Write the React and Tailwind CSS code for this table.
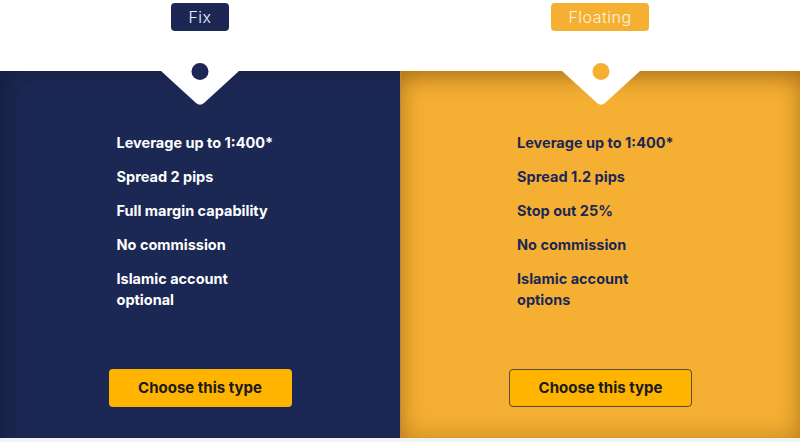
import React from 'react';

const PLANS = [
  {
    name: 'Fix',
    features: ['Leverage up to 1:400*', 'Spread 2 pips', 'Full margin capability', 'No commission', 'Islamic account optional'],
    tag: 'bg-[#1c2754] text-[#eef2ff]',
    panel: 'bg-[#1c2854] text-white shadow-[inset_18px_12px_24px_-12px_rgba(0,0,0,0.25)]',
    dot: 'bg-[#1c2754]',
    button: 'border-transparent',
  },
  {
    name: 'Floating',
    features: ['Leverage up to 1:400*', 'Spread 1.2 pips', 'Stop out 25%', 'No commission', 'Islamic account options'],
    tag: 'bg-[#f5b032] text-[#fdf3df]',
    panel: 'bg-[#f5b034] text-[#1c2754] shadow-[inset_0_14px_22px_-8px_rgba(120,70,0,0.4),inset_0_0_26px_rgba(120,70,0,0.4)]',
    dot: 'bg-[#f5b032]',
    button: 'border-[#5a4a2a]',
  },
];

function Notch({ dot }) {
  return (
    <div className="absolute left-1/2 top-0 -translate-x-1/2 w-[78px] h-[36px]">
      <svg width="78" height="36" viewBox="0 0 78 36" className="block">
        <path d="M0 0 L78 0 L43 32 Q39 35.5 35 32 Z" fill="#ffffff" />
      </svg>
      <span className={`absolute left-1/2 -top-[8px] -translate-x-1/2 w-[17px] h-[17px] rounded-full ${dot}`} />
    </div>
  );
}

export default function App() {
  return (
    <div className="w-[800px] h-[442px] bg-white overflow-hidden" style={{ fontFamily: "Inter, 'Noto Sans', sans-serif" }}>
      <div className="grid grid-cols-[400px_400px] h-[71px]">
        {PLANS.map(p => (
          <div key={p.name} className="flex justify-center pt-[3px]">
            <span className={`h-[28px] px-[17px] rounded-[4px] text-[16px] leading-[28px] font-light tracking-[0.5px] ${p.tag}`}>{p.name}</span>
          </div>
        ))}
      </div>

      <div className="grid grid-cols-[400px_400px] h-[367px]">
        {PLANS.map((p, i) => (
          <div key={p.name} className={`relative flex flex-col items-center ${p.panel} ${i === 1 ? 'border-l border-[#b98a3a]' : ''}`}>
            <Notch dot={p.dot} />
            <ul className="w-[166px] mt-[61px] flex flex-col gap-[13px] text-[14.5px] leading-[21px] font-bold ml-[-1px]">
              {p.features.map(f => (
                <li key={f}>{f}</li>
              ))}
            </ul>
            <button className={`mt-auto mb-[31px] w-[183px] h-[38px] rounded-[4px] bg-[#ffb400] text-[#1a1a1a] text-[15px] font-bold border ${p.button}`}>
              Choose this type
            </button>
          </div>
        ))}
      </div>
      <div className="h-[4px] bg-[#f2f3f5]" />
    </div>
  );
}
